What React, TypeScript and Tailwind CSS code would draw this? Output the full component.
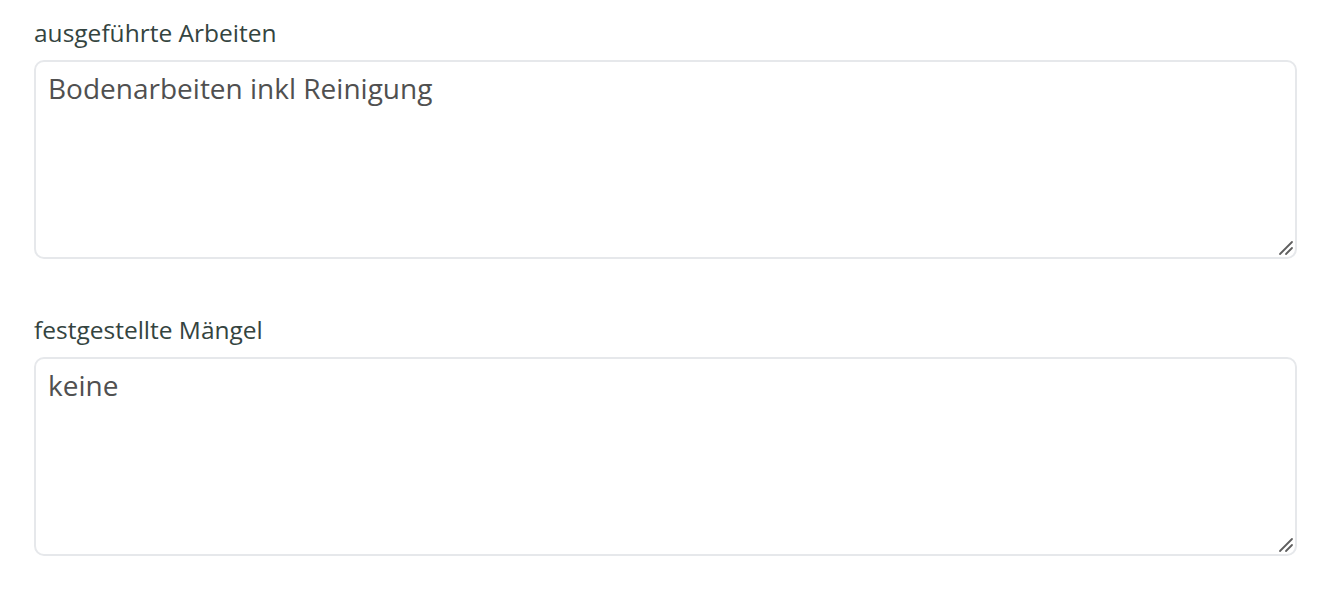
export default function App() {
  return (
    <div className="min-h-screen bg-white pl-[34px] pr-[25px] pt-[17px] font-['Open_Sans',sans-serif]">
      <Field label="ausgeführte Arbeiten" value="Bodenarbeiten inkl Reinigung" />
      <div className="h-[55px]" />
      <Field label="festgestellte Mängel" value="keine" />
    </div>
  );
}

function Field({ label, value }: { label: string; value: string }) {
  return (
    <div className="flex flex-col">
      <label className="text-[24.5px] leading-[32px] text-[#34443f]">{label}</label>
      <div className="relative mt-[11px]">
        <textarea
          defaultValue={value}
          className="block h-[199px] w-full resize-none rounded-[10px] border-2 border-[#e6e8eb] px-[12px] py-[8px] text-[28px] leading-[36px] text-[#505050] outline-none font-['Open_Sans',sans-serif]"
        />
        {/* resize grip */}
        <svg
          className="pointer-events-none absolute bottom-[3px] right-[3px]"
          width="16"
          height="16"
          viewBox="0 0 16 16"
        >
          <path d="M2 14 L14 2 M8 14 L14 8" stroke="#5f5f5f" strokeWidth="1.8" strokeLinecap="round" />
        </svg>
      </div>
    </div>
  );
}
